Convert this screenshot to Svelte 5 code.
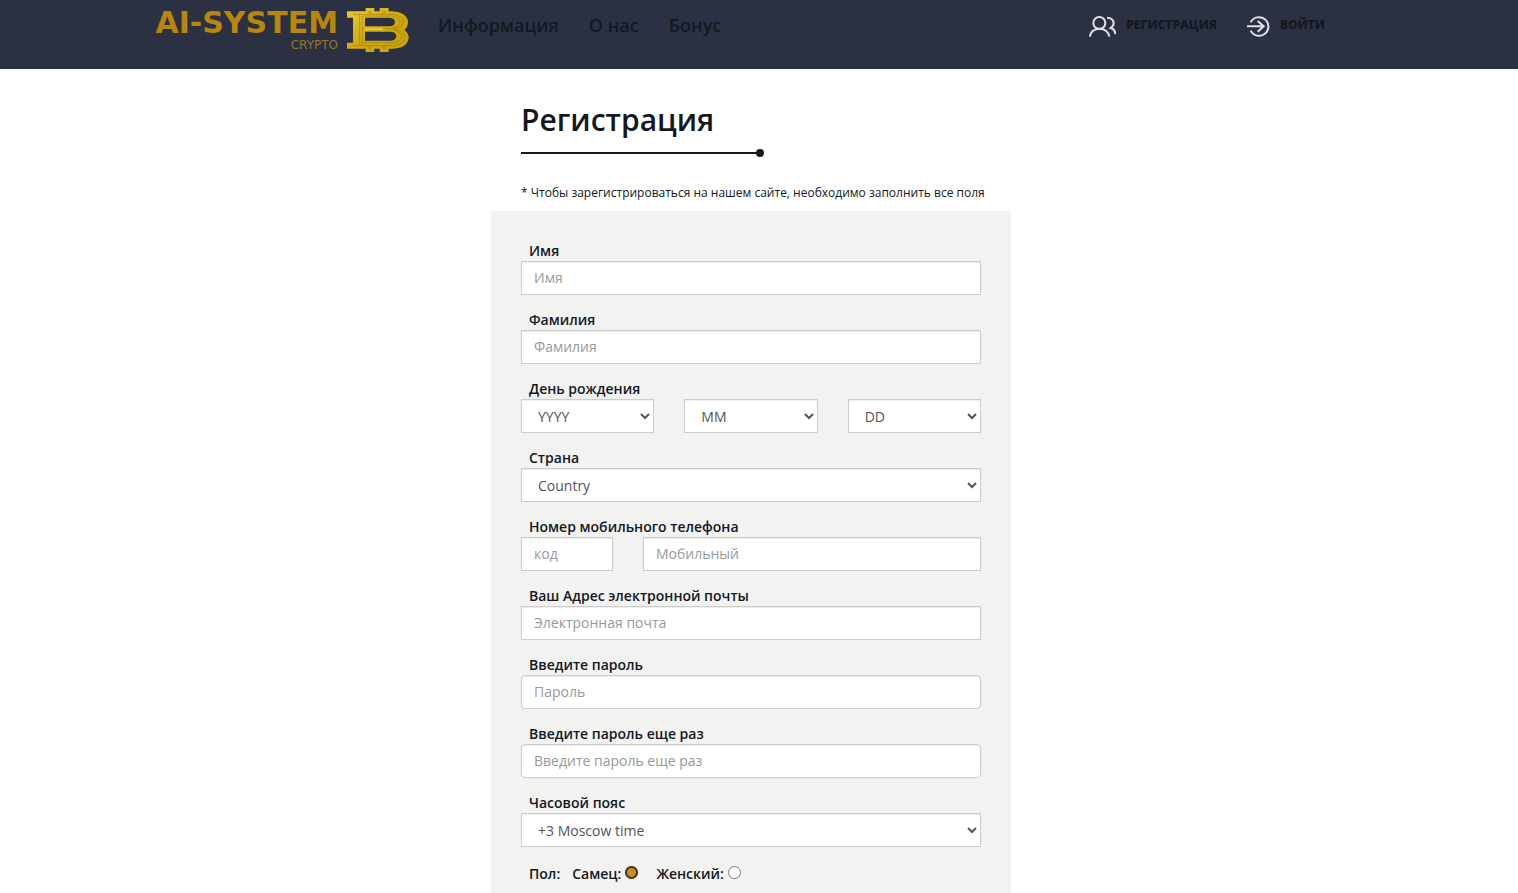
<script lang="ts">
	const menu = ['Информация', 'О нас', 'Бонус'];

	const years = Array.from({ length: 80 }, (_, i) => String(2005 - i));
	const months = Array.from({ length: 12 }, (_, i) => String(i + 1).padStart(2, '0'));
	const days = Array.from({ length: 31 }, (_, i) => String(i + 1).padStart(2, '0'));

	const birthday = [
		{ id: 'year', placeholder: 'YYYY', label: 'Год рождения', options: years },
		{ id: 'month', placeholder: 'MM', label: 'Месяц рождения', options: months },
		{ id: 'day', placeholder: 'DD', label: 'День рождения', options: days }
	];

	let gender = $state('male');
</script>

<div class="page">
	<header class="header">
		<div class="header__inner">
			<a class="logo" href="/">
				<span class="logo__text">
					<span class="logo__name">AI-SYSTEM</span>
					<span class="logo__sub">CRYPTO</span>
				</span>
				<svg class="logo__coin" viewBox="0 0 186 132" aria-hidden="true">
					<defs>
						<linearGradient id="gold" x1="0" y1="0" x2="1" y2="1">
							<stop offset="0" stop-color="#ecca36" />
							<stop offset="0.5" stop-color="#d3a90c" />
							<stop offset="1" stop-color="#c9a208" />
						</linearGradient>
					</defs>
					<path
						fill="url(#gold)"
						fill-rule="evenodd"
						d="M0 10H56V0H82V10H98V0H125V10H135Q181 13 183 42Q183 58 172 66Q186 76 185 90Q181 120 140 122H125V132H98V122H82V132H56V122H0V104H18V29H0ZM54 29V55H128Q144 54 144 42Q144 30 128 29ZM54 71V98H132Q148 97 148 85Q148 72 132 71Z"
					/>
					<g fill="none" stroke="#86680f" stroke-width="2" stroke-opacity="0.65">
						<path d="M17 19H132Q168 21 170 42Q169 60 138 62H44M17 113H138Q172 110 174 88Q172 68 140 64" />
						<path d="M38 20V112M46 24V108M48 24H132Q158 26 159 42Q158 57 136 59M48 104H138Q162 101 164 87Q162 71 142 67" />
						<path d="M66 18V11H72V18M108 18V11H114V18M66 114V121H72V114M108 114V121H114V114" />
					</g>
					<path d="M54 63H108" stroke="#f3dc62" stroke-width="4" />
				</svg>
			</a>

			<nav class="menu">
				{#each menu as item}
					<a class="menu__link" href="/">{item}</a>
				{/each}
			</nav>

			<div class="auth">
				<a class="auth__link" href="/register">
					<svg width="27" height="21" viewBox="0 0 81 63" aria-hidden="true">
						<circle cx="31" cy="21" r="18" />
						<path d="M3 62C4 46 17 38 31 38S58 46 61 62" />
						<path d="M54 5C66 5 74 12 74 22C74 29 70 33 65 36C74 39 79 46 79 55" />
					</svg>
					Регистрация
				</a>
				<a class="auth__link" href="/login">
					<svg width="23" height="21" viewBox="0 0 69 63" aria-hidden="true">
						<path d="M11 19A28 28 0 1 1 11 44" />
						<path d="M0 31H50M32 15L50 31L32 47" />
					</svg>
					Войти
				</a>
			</div>
		</div>
	</header>

	<main class="main">
		<div class="intro">
			<h1>Регистрация</h1>
			<div class="rule"></div>
			<p class="note">* Чтобы зарегистрироваться на нашем сайте, необходимо заполнить все поля</p>
		</div>

		<form class="form">
			<div class="group">
				<label for="first-name">Имя</label>
				<input class="control" id="first-name" type="text" placeholder="Имя" />
			</div>

			<div class="group">
				<label for="last-name">Фамилия</label>
				<input class="control" id="last-name" type="text" placeholder="Фамилия" />
			</div>

			<div class="group">
				<label for="year">День рождения</label>
				<div class="thirds">
					{#each birthday as part}
						<select class="control" id={part.id} aria-label={part.label}>
							<option value="">{part.placeholder}</option>
							{#each part.options as option}
								<option>{option}</option>
							{/each}
						</select>
					{/each}
				</div>
			</div>

			<div class="group">
				<label for="country">Страна</label>
				<select class="control" id="country">
					<option>Country</option>
				</select>
			</div>

			<div class="group">
				<label for="phone">Номер мобильного телефона</label>
				<div class="phone">
					<input class="control phone__code" type="text" placeholder="код" aria-label="код" />
					<input class="control" id="phone" type="tel" placeholder="Мобильный" />
				</div>
			</div>

			<div class="group">
				<label for="email">Ваш Адрес электронной почты</label>
				<input class="control" id="email" type="email" placeholder="Электронная почта" />
			</div>

			<div class="group">
				<label for="password">Введите пароль</label>
				<input class="control control--rounded" id="password" type="password" placeholder="Пароль" />
			</div>

			<div class="group">
				<label for="password-repeat">Введите пароль еще раз</label>
				<input
					class="control control--rounded"
					id="password-repeat"
					type="password"
					placeholder="Введите пароль еще раз"
				/>
			</div>

			<div class="group">
				<label for="timezone">Часовой пояс</label>
				<select class="control" id="timezone">
					<option>+3 Moscow time</option>
				</select>
			</div>

			<div class="gender" role="radiogroup" aria-labelledby="gender-title">
				<span class="gender__title" id="gender-title">Пол:</span>
				<label class="gender__option">
					Самец:<input type="radio" name="gender" value="male" bind:group={gender} />
				</label>
				<label class="gender__option">
					Женский:<input type="radio" name="gender" value="female" bind:group={gender} />
				</label>
			</div>
		</form>
	</main>
</div>

<style>
	:global(body) {
		margin: 0;
		background: #fff;
	}

	.page,
	.page * {
		box-sizing: border-box;
	}

	.page {
		display: flex;
		flex-direction: column;
		min-height: 100vh;
		font-family: 'Open Sans', 'Noto Sans', sans-serif;
		font-size: 14px;
		line-height: 20px;
		color: #14181f;
	}

	.header {
		padding-right: 16px;
		background: #2b3143;
	}

	.header__inner {
		display: flex;
		align-items: flex-start;
		max-width: 1226px;
		height: 69px;
		margin: 0 auto;
		padding-right: 39px;
	}

	.header a {
		color: #14181f;
		text-decoration: none;
	}

	.logo {
		display: flex;
		justify-content: flex-end;
		gap: 9px;
		width: 271px;
		padding-top: 8px;
	}

	.logo__text {
		display: flex;
		flex-direction: column;
		align-items: flex-end;
		font-family: 'DejaVu Sans', sans-serif;
		color: #b8860b;
	}

	.logo__name {
		font-size: 30px;
		font-weight: 700;
		line-height: 30px;
	}

	.logo__sub {
		font-size: 12px;
		line-height: 14px;
		color: #98752a;
	}

	.logo__coin {
		flex: none;
		width: 62px;
		height: 44px;
	}

	.menu {
		display: flex;
		gap: 30px;
		padding: 15px 0 0 29px;
	}

	.menu__link {
		font-size: 18px;
		font-weight: 600;
	}

	.auth {
		display: flex;
		gap: 30px;
		margin-left: auto;
		padding-top: 15px;
	}

	.auth__link {
		display: flex;
		gap: 10px;
		font-size: 12px;
		font-weight: 800;
		text-transform: uppercase;
	}

	.auth__link svg {
		margin-top: 1px;
		fill: none;
		stroke: #dfe1e4;
		stroke-width: 6;
	}

	.main {
		display: flex;
		flex: 1;
		flex-direction: column;
		align-items: center;
		padding: 34px 16px 0 0;
	}

	.intro,
	.form {
		width: 100%;
		max-width: 520px;
		padding: 0 30px;
	}

	h1 {
		margin: 0 0 16px;
		font-size: 30px;
		font-weight: 600;
		line-height: 33px;
	}

	.rule {
		position: relative;
		width: 240px;
		height: 2px;
		background: #14181f;
	}

	.rule::after {
		content: '';
		position: absolute;
		top: -3px;
		right: -3px;
		width: 8px;
		height: 8px;
		border-radius: 50%;
		background: #14181f;
	}

	.note {
		margin: 29px 0 8px;
		font-size: 12px;
		white-space: nowrap;
	}

	.form {
		flex: 1;
		padding-top: 30px;
		background: #f2f2f0;
	}

	.group {
		margin-bottom: 15px;
	}

	.group > label {
		display: block;
		padding-left: 8px;
		font-weight: 600;
	}

	.control {
		display: block;
		width: 100%;
		min-width: 0;
		height: 34px;
		margin: 0;
		padding: 6px 12px;
		border: 1px solid #ccc;
		border-radius: 0;
		background-color: #fff;
		box-shadow: inset 0 1px 1px rgba(0, 0, 0, 0.075);
		font: inherit;
		color: #555;
	}

	input.control {
		padding: 5px 12px 7px;
	}

	.control::placeholder {
		color: #999;
		opacity: 1;
	}

	.control--rounded {
		border-radius: 4px;
	}

	.thirds {
		display: grid;
		grid-template-columns: repeat(3, 1fr);
		gap: 30px;
	}

	.phone {
		display: flex;
		gap: 30px;
	}

	.phone__code {
		flex: 0 0 20%;
	}

	.gender {
		display: flex;
		gap: 12px;
		padding: 2px 8px 0;
		font-weight: 600;
	}

	.gender__option {
		display: flex;
		gap: 4px;
		margin-right: 6px;
	}

	.gender input {
		width: 13px;
		height: 13px;
		margin: 2px 0 0;
		appearance: none;
		border: 1px solid #767676;
		border-radius: 50%;
		background: #fff;
	}

	.gender input:checked {
		border: 2px solid #40382a;
		background: #c98f26;
		box-shadow: 0 0 1px #c98f26;
	}
</style>
